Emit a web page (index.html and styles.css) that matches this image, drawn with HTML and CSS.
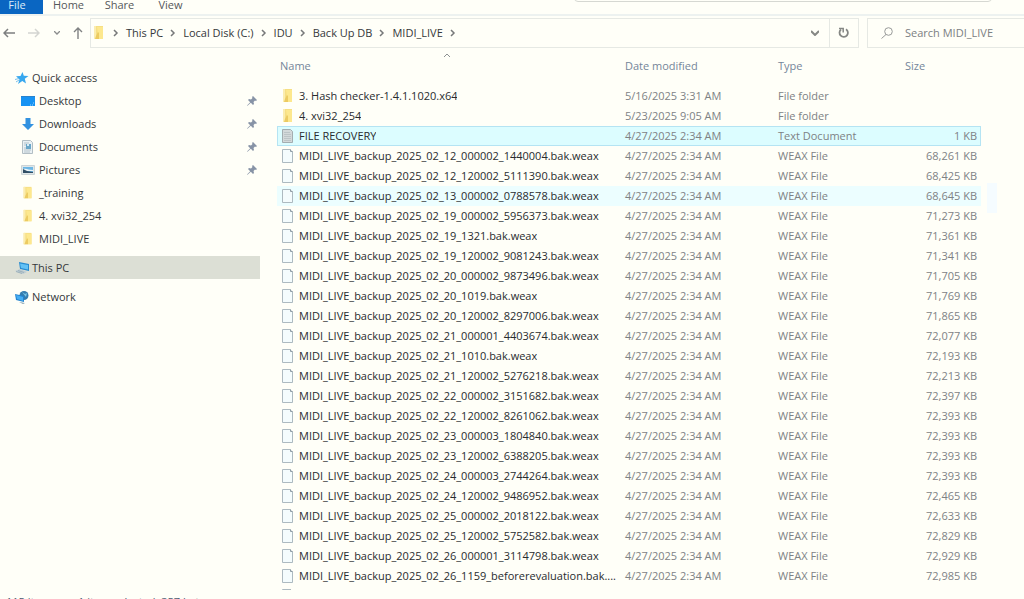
FILE: index.html
```html
<!DOCTYPE html>
<html lang="en">
<head>
  <meta charset="UTF-8">
  <title>MIDI_LIVE</title>
  <link rel="stylesheet" href="styles.css">
</head>
<body>

<!-- Shared icons -->
<svg class="icon-defs" width="0" height="0">
  <symbol id="i-folder" viewBox="0 0 16 16">
    <path d="M3 1h9v13H3z" fill="#f6df84"/>
    <path d="M3 1h2v13H3z" fill="#fbedb0"/>
    <path d="M6 2h6v12H8z" fill="#fde88e"/>
    <path d="M4 14l1-3 2-4 1 1v6z" fill="#eccb62"/>
  </symbol>
  <symbol id="i-file" viewBox="0 0 16 16">
    <path d="M2.500 1.500h8l2 2v11h-10z" fill="#f4fcfd" stroke="#adbac0"/>
    <path d="M10.500 1.500v2h2" fill="#fff" stroke="#8e9ca4"/>
  </symbol>
  <symbol id="i-text" viewBox="0 0 16 16">
    <path d="M2.500 1.500h8l2 2v11h-10z" fill="#d3d9da" stroke="#a3adb0"/>
    <path d="M4 4.500h6M4 6.500h7M4 8.500h7M4 10.500h7M4 12.500h7" stroke="#bcc4c6"/>
  </symbol>
  <symbol id="i-pin" viewBox="0 0 10 10">
    <path d="M6 0l4 4-1 1-1-.5L6.500 6 7 8 6 9 3.800 6.800.5 9.800 0 9.500l3.200-3.300L1 4l1-1 2 .5L5.500 2 5 1z" fill="#8793a6"/>
  </symbol>
  <symbol id="i-chevron" viewBox="0 0 6 8">
    <path d="M1 1l3 3-3 3" fill="none" stroke="#77797a" stroke-width="1.500"/>
  </symbol>
</svg>

<div class="explorer">
  <nav class="ribbon">
    <button class="tab tab-file">File</button>
    <button class="tab">Home</button>
    <button class="tab">Share</button>
    <button class="tab">View</button>
    <div class="popup-edge"></div>
  </nav>

  <div class="toolbar">
    <div class="nav-buttons">
      <button aria-label="Back"><svg width="12" height="10" viewBox="0 0 12 10"><path d="M12 5H1M5 1L1 5l4 4" fill="none" stroke="#7d7f7f" stroke-width="1.500"/></svg></button>
      <button aria-label="Forward"><svg width="12" height="10" viewBox="0 0 12 10"><path d="M0 5h11M7 1l4 4-4 4" fill="none" stroke="#d4d5d1" stroke-width="1.500"/></svg></button>
      <button aria-label="Recent locations"><svg width="6" height="4" viewBox="0 0 6 4"><path d="M0 0l3 3 3-3" fill="none" stroke="#8b8d8d" stroke-width="1.300"/></svg></button>
      <button aria-label="Up"><svg width="10" height="12" viewBox="0 0 10 12"><path d="M5 12V1M1 5l4-4 4 4" fill="none" stroke="#808283" stroke-width="1.400"/></svg></button>
    </div>
    <div class="address">
      <svg class="icon" width="16" height="16"><use href="#i-folder"/></svg>
      <ol class="crumbs">
        <li><svg width="6" height="8"><use href="#i-chevron"/></svg><a href="#">This PC</a></li>
        <li><svg width="6" height="8"><use href="#i-chevron"/></svg><a href="#">Local Disk (C:)</a></li>
        <li><svg width="6" height="8"><use href="#i-chevron"/></svg><a href="#">IDU</a></li>
        <li><svg width="6" height="8"><use href="#i-chevron"/></svg><a href="#">Back Up DB</a></li>
        <li><svg width="6" height="8"><use href="#i-chevron"/></svg><a href="#">MIDI_LIVE</a></li>
        <li><svg width="6" height="8"><use href="#i-chevron"/></svg></li>
      </ol>
      <button class="history" aria-label="Previous locations"><svg width="8" height="6" viewBox="0 0 8 6"><path d="M0 1l4 4 4-4" fill="none" stroke="#858784" stroke-width="2"/></svg></button>
      <button class="refresh" aria-label="Refresh"><svg width="12" height="12" viewBox="0 0 12 12"><path d="M8 2.200A4.200 4.200 0 1 1 3 2.500" fill="none" stroke="#858784" stroke-width="1.800"/><path d="M1 1.500h4.200v4" fill="none" stroke="#858784" stroke-width="1.500"/></svg></button>
    </div>
    <label class="search">
      <svg width="12" height="12" viewBox="0 0 12 12"><circle cx="7.500" cy="4.500" r="3.800" fill="none" stroke="#989a99"/><path d="M5 7.500L.5 11.500" stroke="#989a99"/></svg>
      <input type="text" placeholder="Search MIDI_LIVE" aria-label="Search MIDI_LIVE">
    </label>
  </div>

  <div class="main">
    <aside class="sidebar">
      <a class="item root" href="#">
        <svg class="icon" width="14" height="14" viewBox="0 0 14 14"><path d="M7.500 1l1.300 3.800 4.700.2-3.700 2.800L11 12.500 7.300 10 3 13l1.500-4.500L1 5.200l4.500-.3z" fill="#38a8ef"/><path d="M0 8.500l4-1M1 11l3-2" stroke="#79bfea"/></svg>
        Quick access</a>
      <a class="item" href="#">
        <svg class="icon" width="14" height="14" viewBox="0 0 14 14"><path d="M0 2h14v10H0z" fill="#1793f3"/><path d="M0 2h14v1H0z" fill="#2882cd"/><path d="M9 11h1m1 0h1m0-2h1" stroke="#9ed6ff"/></svg>
        Desktop
        <svg class="pin" width="10" height="10"><use href="#i-pin"/></svg></a>
      <a class="item" href="#">
        <svg class="icon" width="14" height="14" viewBox="0 0 14 14"><path d="M4.500 1h5v6H13l-6 6-6-6h3.500z" fill="#3292e0"/></svg>
        Downloads
        <svg class="pin" width="10" height="10"><use href="#i-pin"/></svg></a>
      <a class="item" href="#">
        <svg class="icon" width="14" height="14" viewBox="0 0 14 14"><path d="M1.500.5h8l2 2v11h-10z" fill="#eaf1f4" stroke="#b2bec4"/><path d="M3 3h5M3 5h2M3 8h2M3 10h7M3 12h6" stroke="#b3c2ca"/><path d="M5 4h5v5H5z" fill="#69a7c9"/><path d="M6 4h2v2H6z" fill="#d6edf7"/></svg>
        Documents
        <svg class="pin" width="10" height="10"><use href="#i-pin"/></svg></a>
      <a class="item" href="#">
        <svg class="icon" width="14" height="14" viewBox="0 0 14 14"><path d="M.5 2.500h13v9H.5z" fill="#dfe7e9" stroke="#ccd4d6"/><path d="M2 4h10v6H2z" fill="#6db7e5"/><path d="M2 6c4-1 5 1 10 1v1H2z" fill="#eaf5fa"/><path d="M2 6l4 2 6 1v1H2z" fill="#314e65"/></svg>
        Pictures
        <svg class="pin" width="10" height="10"><use href="#i-pin"/></svg></a>
      <a class="item" href="#"><svg class="icon" width="14" height="14"><use href="#i-folder"/></svg>_training</a>
      <a class="item" href="#"><svg class="icon" width="14" height="14"><use href="#i-folder"/></svg>4. xvi32_254</a>
      <a class="item" href="#"><svg class="icon" width="14" height="14"><use href="#i-folder"/></svg>MIDI_LIVE</a>
      <a class="item root spaced active" href="#">
        <svg class="icon" width="14" height="14" viewBox="0 0 14 14"><path d="M4 1l10 2v7L5 8z" fill="#278bd0"/><path d="M5 2.500l8 1.500v4.500L6 7z" fill="#62c1f5"/><path d="M0 10l5-2 7 3-4 2z" fill="#bdccd3"/><path d="M1 10.500l6 2M3 9.500l6 2" stroke="#9db1bb"/></svg>
        This PC</a>
      <a class="item root spaced" href="#">
        <svg class="icon" width="14" height="14" viewBox="0 0 14 14"><circle cx="9" cy="5.500" r="4.500" fill="#347caf"/><path d="M7 2l3 2 2-1-1 4z" fill="#75c4e8"/><path d="M0 4l9 2v6l-8-2z" fill="#2383cf"/><path d="M1 5l7 2v4L2 9z" fill="#45adf3"/><path d="M4 12l6 1-2 1z" fill="#829fb1"/></svg>
        Network</a>
    </aside>

    <section class="files">
      <svg class="sort" width="8" height="5" viewBox="0 0 8 5"><path d="M1 4l3-3 3 3" fill="none" stroke="#8d9192"/></svg>
      <table>
        <thead>
          <tr><th class="c-name">Name</th><th class="c-date">Date modified</th><th class="c-type">Type</th><th class="c-size">Size</th></tr>
        </thead>
        <tbody id="rows"></tbody>
      </table>
      <div class="scroll-mark"></div>
    </section>
  </div>

  <footer class="status"><span>115 items</span><span>1 item selected&nbsp; 357 bytes</span></footer>
</div>

<script src="files.js"></script>
</body>
</html>
```
FILE: styles.css
```css
* {
  box-sizing: border-box;
}

body {
  margin: 0;
  background: #fffff8;
  color: #35383b;
  font-family: "Open Sans", "Noto Sans", sans-serif;
  font-size: 11px;
  line-height: 16px;
}

button {
  font: inherit;
  color: inherit;
  background: none;
  border: none;
  padding: 0;
  display: flex;
  align-items: center;
  justify-content: center;
}

a {
  color: inherit;
  text-decoration: none;
}

svg {
  display: block;
  flex: none;
}

.icon-defs {
  position: absolute;
}

.explorer {
  height: 100vh;
  display: flex;
  flex-direction: column;
  overflow: hidden;
  position: relative;
}

/* Ribbon */
.ribbon {
  height: 16px;
  flex: none;
  display: flex;
  border-bottom: 2px solid #edf2f0;
  position: relative;
}

.tab {
  width: 51px;
  height: 14px;
  padding-bottom: 5px;
  color: #55585b;
}

.tab-file {
  width: 43px;
  padding-right: 9px;
  background: #0a66c2;
  color: #dcebf8;
}

.popup-edge {
  position: absolute;
  top: -10px;
  right: 32px;
  width: 42%;
  max-width: 418px;
  height: 12px;
  border: 1px solid #d6d8d2;
  border-radius: 4px;
}

/* Address row */
.toolbar {
  display: flex;
  flex: none;
  height: 30px;
  margin-top: 2px;
}

.nav-buttons {
  width: 90px;
  padding: 0 7px 0 3px;
  display: flex;
  align-items: center;
  justify-content: space-between;
}

.address {
  flex: 1;
  display: flex;
  align-items: center;
  border: 1px solid #e6e9e4;
}

.crumbs {
  flex: 1;
  display: flex;
  margin: 0;
  padding: 0 0 0 6px;
  list-style: none;
}

.crumbs li {
  display: flex;
  align-items: center;
  gap: 7px;
  margin-right: 7px;
}

.history,
.refresh {
  width: 29px;
  height: 28px;
}

.refresh {
  border-left: 1px solid #e6e9e4;
}

.search {
  width: 157px;
  margin-left: 8px;
  padding-left: 13px;
  display: flex;
  align-items: center;
  gap: 12px;
  border: 1px solid #e6e9e4;
  border-right: none;
}

.search input {
  width: 100%;
  min-width: 0;
  padding: 0;
  border: none;
  outline: none;
  background: none;
  font: inherit;
}

.search input::placeholder {
  color: #7c8083;
  opacity: 1;
}

/* Main area */
.main {
  flex: 1;
  min-height: 0;
  display: flex;
}

.sidebar {
  width: 260px;
  flex: none;
  padding-top: 18px;
}

.item {
  display: flex;
  align-items: center;
  gap: 4px;
  height: 23px;
  padding: 0 3px 0 21px;
}

.root {
  padding-left: 15px;
  gap: 3px;
}

.spaced {
  margin-top: 6px;
}

.active {
  background: #dcdfd5;
}

.pin {
  margin-left: auto;
}

.files {
  flex: 1;
  min-width: 0;
  padding: 0 43px 0 17px;
  overflow: hidden;
  position: relative;
}

.sort {
  position: absolute;
  top: 5px;
  left: 183px;
}

table {
  width: 100%;
  table-layout: fixed;
  border-collapse: collapse;
}

th {
  height: 38px;
  padding: 0 4px 3px;
  font-weight: normal;
  text-align: left;
  color: #75869a;
}

td {
  height: 20px;
  padding: 0 4px;
  color: #7e8285;
  white-space: nowrap;
}

th.c-name {
  width: 344px;
  padding-left: 3px;
}

.c-date {
  width: 153px;
}

.c-type {
  width: 127px;
}

td:first-child {
  padding: 0 0 0 3px;
}

td:last-child {
  text-align: right;
}

.name {
  display: flex;
  align-items: center;
  gap: 3px;
  color: #292c2f;
}

.name span {
  overflow: hidden;
  text-overflow: ellipsis;
}

.selected {
  background: #dcfdff;
  outline: 1px solid #b5e4f3;
  outline-offset: -1px;
}

.hover {
  background: #ecfeff;
}

.scroll-mark {
  position: absolute;
  top: 135px;
  right: 27px;
  width: 10px;
  height: 30px;
  background: #f5fcff;
}

/* Status bar */
.status {
  height: 9px;
  flex: none;
  display: flex;
  gap: 22px;
  padding: 4px 6px 0;
  overflow: hidden;
  color: #4c5a70;
}
```
FILE: files.js
```javascript
const weaxFiles = [
  ["2025_02_12_000002_1440004.bak.weax", "68,261"],
  ["2025_02_12_120002_5111390.bak.weax", "68,425"],
  ["2025_02_13_000002_0788578.bak.weax", "68,645"],
  ["2025_02_19_000002_5956373.bak.weax", "71,273"],
  ["2025_02_19_1321.bak.weax", "71,361"],
  ["2025_02_19_120002_9081243.bak.weax", "71,341"],
  ["2025_02_20_000002_9873496.bak.weax", "71,705"],
  ["2025_02_20_1019.bak.weax", "71,769"],
  ["2025_02_20_120002_8297006.bak.weax", "71,865"],
  ["2025_02_21_000001_4403674.bak.weax", "72,077"],
  ["2025_02_21_1010.bak.weax", "72,193"],
  ["2025_02_21_120002_5276218.bak.weax", "72,213"],
  ["2025_02_22_000002_3151682.bak.weax", "72,397"],
  ["2025_02_22_120002_8261062.bak.weax", "72,393"],
  ["2025_02_23_000003_1804840.bak.weax", "72,393"],
  ["2025_02_23_120002_6388205.bak.weax", "72,393"],
  ["2025_02_24_000003_2744264.bak.weax", "72,393"],
  ["2025_02_24_120002_9486952.bak.weax", "72,465"],
  ["2025_02_25_000002_2018122.bak.weax", "72,633"],
  ["2025_02_25_120002_5752582.bak.weax", "72,829"],
  ["2025_02_26_000001_3114798.bak.weax", "72,929"],
  ["2025_02_26_1159_beforerevaluation.bak....", "72,985"]
];

const rows = [
  ["folder", "3. Hash checker-1.4.1.1020.x64", "5/16/2025 3:31 AM", "File folder", ""],
  ["folder", "4. xvi32_254", "5/23/2025 9:05 AM", "File folder", ""],
  ["text", "FILE RECOVERY", "4/27/2025 2:34 AM", "Text Document", "1 KB", "selected"]
];

weaxFiles.forEach(([name, size], i) => {
  rows.push(["file", "MIDI_LIVE_backup_" + name, "4/27/2025 2:34 AM", "WEAX File", size + " KB", i === 2 ? "hover" : ""]);
});
rows.push(["file", "", "", "", ""]);

document.getElementById("rows").innerHTML = rows.map(([icon, name, date, type, size, state]) => `
  <tr class="${state || ""}">
    <td><div class="name"><svg width="16" height="16"><use href="#i-${icon}"/></svg><span>${name}</span></div></td>
    <td>${date}</td><td>${type}</td><td>${size}</td>
  </tr>`).join("");
```
